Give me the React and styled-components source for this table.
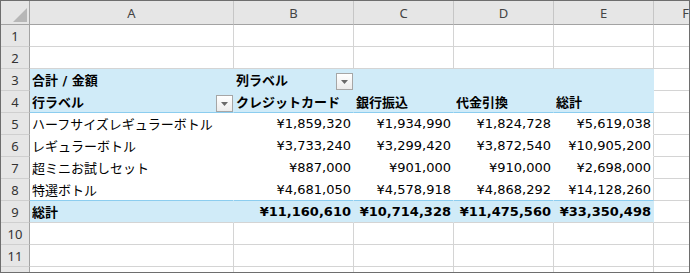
import React from "react";
import styled, { createGlobalStyle } from "styled-components";

const GRID = "#d4d4d4";
const PIVOT_BG = "#d0ebf8";
const PIVOT_LINE = "#8ccdef";

const GlobalStyle = createGlobalStyle`
  html, body {
    margin: 0;
    padding: 0;
    background: #ffffff;
  }
`;

const COLUMNS = [
  { key: "A", width: 204 },
  { key: "B", width: 120 },
  { key: "C", width: 100 },
  { key: "D", width: 100 },
  { key: "E", width: 100 },
  { key: "F", width: 64 },
];

const BODY = [
  ["ハーフサイズレギュラーボトル", "¥1,859,320", "¥1,934,990", "¥1,824,728", "¥5,619,038"],
  ["レギュラーボトル", "¥3,733,240", "¥3,299,420", "¥3,872,540", "¥10,905,200"],
  ["超ミニお試しセット", "¥887,000", "¥901,000", "¥910,000", "¥2,698,000"],
  ["特選ボトル", "¥4,681,050", "¥4,578,918", "¥4,868,292", "¥14,128,260"],
];

const TOTAL = ["総計", "¥11,160,610", "¥10,714,328", "¥11,475,560", "¥33,350,498"];

const Sheet = styled.div`
  width: 690px;
  height: 273px;
  box-sizing: border-box;
  border: 1px solid #6e6e6e;
  overflow: hidden;
  background: #ffffff;
`;

const Grid = styled.div`
  display: grid;
  grid-template-columns: 29px ${COLUMNS.map((c) => `${c.width}px`).join(" ")};
  grid-template-rows: 24px repeat(12, 22px);
  width: max-content;
`;

const Corner = styled.div`
  box-sizing: border-box;
  background: #e6e6e6;
  border-right: 1px solid #a3a3a3;
  border-bottom: 1px solid #a3a3a3;
  display: flex;
  align-items: flex-end;
  justify-content: flex-end;
  padding: 0 2px 2px 0;
`;

const ColHead = styled.div`
  box-sizing: border-box;
  background: #e6e6e6;
  border-right: 1px solid #c6c6c6;
  border-bottom: 1px solid #a3a3a3;
  display: flex;
  align-items: center;
  justify-content: center;
  font-family: "Noto Sans", "Liberation Sans", sans-serif;
  font-size: 13px;
  color: #444444;
  padding-top: 1px;
`;

const RowHead = styled.div`
  box-sizing: border-box;
  background: #e6e6e6;
  border-right: 1px solid #a3a3a3;
  border-bottom: 1px solid #cfcfcf;
  display: flex;
  align-items: center;
  justify-content: center;
  font-family: "Noto Sans", "Liberation Sans", sans-serif;
  font-size: 13px;
  color: #333333;
`;

const Cell = styled.div`
  box-sizing: border-box;
  min-width: 0;
  display: flex;
  align-items: center;
  justify-content: ${(p) => (p.$align === "right" ? "flex-end" : "flex-start")};
  padding: 0 ${(p) => (p.$align === "right" ? "2px" : "0")} 0 ${(p) => (p.$align === "right" ? "0" : "2px")};
  background: ${(p) => p.$bg || "#ffffff"};
  border-right: 1px solid ${(p) => p.$right || GRID};
  border-bottom: 1px solid ${(p) => p.$bottom || GRID};
  font-family: "DejaVu Sans", "Noto Sans CJK JP", sans-serif;
  font-size: 13px;
  font-weight: ${(p) => (p.$bold ? 700 : 400)};
  color: #000000;
  white-space: nowrap;
  overflow: hidden;
`;

const Label = styled.span`
  flex: 1;
  min-width: 0;
  overflow: hidden;
  padding-bottom: 1px;
`;

const Value = styled.span`
  padding-bottom: 1px;
`;

const FilterButton = styled.span`
  box-sizing: border-box;
  flex: none;
  align-self: flex-end;
  width: 17px;
  height: 17px;
  border: 1px solid #a6a6a6;
  background: linear-gradient(#ffffff, #ececec);
  display: flex;
  align-items: center;
  justify-content: center;
`;

function CornerMark() {
  return (
    <svg width="14" height="14" viewBox="0 0 14 14">
      <polygon points="14,0 14,14 0,14" fill="#b7b7b7" />
    </svg>
  );
}

function Filter() {
  return (
    <FilterButton>
      <svg width="7" height="4" viewBox="0 0 7 4">
        <polygon points="0,0 7,0 3.5,4" fill="#6a6a6a" />
      </svg>
    </FilterButton>
  );
}

// what sits in one cell of rows 3..9, columns A..E (the pivot)
function pivotCell(row, col) {
  const lastCol = col === 4;
  if (row === 3 || row === 4) {
    const head3 = ["合計 / 金額", "列ラベル", "", "", ""];
    const head4 = ["行ラベル", "クレジットカード", "銀行振込", "代金引換", "総計"];
    const text = row === 3 ? head3[col] : head4[col];
    const hasFilter = (row === 3 && col === 1) || (row === 4 && col === 0);
    return {
      props: {
        $bg: PIVOT_BG,
        $right: PIVOT_BG,
        $bottom: row === 4 ? PIVOT_LINE : PIVOT_BG,
        $bold: true,
      },
      content: (
        <>
          <Label>{text}</Label>
          {hasFilter && <Filter />}
        </>
      ),
    };
  }
  if (row === 9) {
    return {
      props: {
        $bg: PIVOT_BG,
        $right: PIVOT_BG,
        $bottom: GRID,
        $bold: true,
        $align: col === 0 ? "left" : "right",
      },
      content: col === 0 ? <Label>{TOTAL[col]}</Label> : <Value>{TOTAL[col]}</Value>,
    };
  }
  const text = BODY[row - 5][col];
  return {
    props: {
      $right: lastCol ? GRID : "#ffffff",
      $bottom: row === 8 ? PIVOT_LINE : "#ffffff",
      $align: col === 0 ? "left" : "right",
    },
    content: col === 0 ? <Label>{text}</Label> : <Value>{text}</Value>,
  };
}

function SheetRow({ row, clipped }) {
  return (
    <>
      <RowHead>{clipped ? null : row}</RowHead>
      {COLUMNS.map((c, col) => {
        if (row >= 3 && row <= 9 && col < 5) {
          const { props, content } = pivotCell(row, col);
          return (
            <Cell key={c.key} {...props}>
              {content}
            </Cell>
          );
        }
        return <Cell key={c.key} />;
      })}
    </>
  );
}

export default function App() {
  const rows = Array.from({ length: 12 }, (_, i) => i + 1);
  return (
    <>
      <GlobalStyle />
      <Sheet>
        <Grid>
          <Corner>
            <CornerMark />
          </Corner>
          {COLUMNS.map((c) => (
            <ColHead key={c.key}>{c.key}</ColHead>
          ))}
          {rows.map((r) => (
            // row 12 is only a sliver at the bottom edge, its number is not visible
            <SheetRow key={r} row={r} clipped={r === 12} />
          ))}
        </Grid>
      </Sheet>
    </>
  );
}
